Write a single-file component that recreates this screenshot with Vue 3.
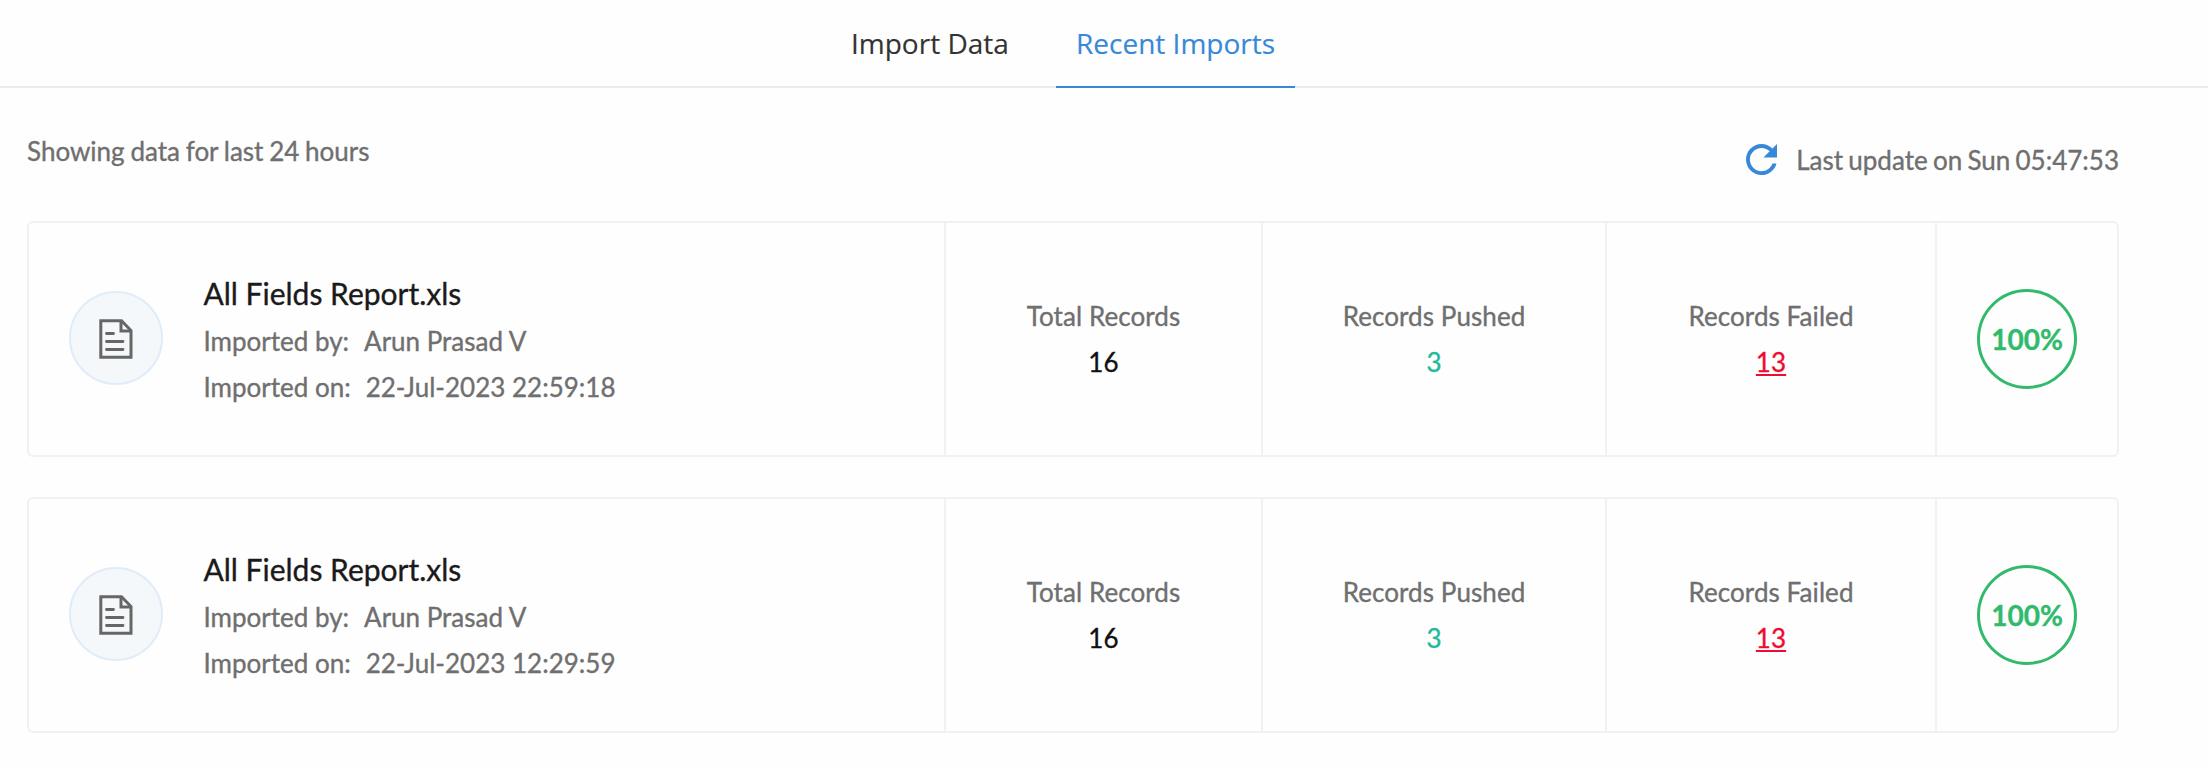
<script setup>
const tabs = [
  { label: 'Import Data', active: false },
  { label: 'Recent Imports', active: true },
]

const imports = [
  { file: 'All Fields Report.xls', by: 'Arun Prasad V', on: '22-Jul-2023 22:59:18', total: 16, pushed: 3, failed: 13, progress: '100%' },
  { file: 'All Fields Report.xls', by: 'Arun Prasad V', on: '22-Jul-2023 12:29:59', total: 16, pushed: 3, failed: 13, progress: '100%' },
]
</script>

<template>
  <div class="page">
    <nav class="tabs">
      <a v-for="tab in tabs" :key="tab.label" class="tab" :class="{ active: tab.active }">{{ tab.label }}</a>
    </nav>

    <main class="content">
      <header class="summary">
        <span class="range">Showing data for last 24 hours</span>
        <span class="updated">
          <svg class="refresh" viewBox="4 4 16 16" fill="currentColor">
            <path d="M17.65 6.35C16.2 4.9 14.21 4 12 4c-4.42 0-7.99 3.58-7.99 8s3.57 8 7.99 8c3.73 0 6.84-2.55 7.73-6h-2.08c-.82 2.33-3.04 4-5.65 4-3.31 0-6-2.69-6-6s2.69-6 6-6c1.66 0 3.14.69 4.22 1.78L13 11h7V4l-2.35 2.35z" />
          </svg>
          <span class="stamp">Last update on Sun 05:47:53</span>
        </span>
      </header>

      <section v-for="item in imports" :key="item.on" class="card">
        <div class="info">
          <span class="badge">
            <svg class="doc" viewBox="0 0 34 40" fill="none" stroke="currentColor" stroke-width="3">
              <path d="M1.8 1.8H22.5L32 11.5V38.2H1.8Z" />
              <path d="M22 1.8V12H32" />
              <path d="M7.5 14.5H14.5M7.5 22.5H24M7.5 30.5H24" stroke-width="2.8" stroke-linecap="round" />
            </svg>
          </span>
          <div class="details">
            <div class="file">{{ item.file }}</div>
            <div class="meta"><span>Imported by:</span><span class="value">{{ item.by }}</span></div>
            <div class="meta"><span>Imported on:</span><span class="value">{{ item.on }}</span></div>
          </div>
        </div>
        <div class="stat">
          <span>Total Records</span>
          <span class="total">{{ item.total }}</span>
        </div>
        <div class="stat">
          <span>Records Pushed</span>
          <span class="pushed">{{ item.pushed }}</span>
        </div>
        <div class="stat">
          <span>Records Failed</span>
          <a class="failed">{{ item.failed }}</a>
        </div>
        <div class="progress">
          <span class="ring">{{ item.progress }}</span>
        </div>
      </section>
    </main>
  </div>
</template>

<style>
body {
  background: #fefefe;
}
</style>

<style scoped>
.page,
.page * {
  box-sizing: border-box;
}
.page {
  width: 2208px;
  height: 770px;
  overflow: hidden;
  background: #fefefe;
  font-family: Lato, "Liberation Sans", sans-serif;
  font-size: 26px;
  line-height: 46px;
  color: #6f6f6f;
  -webkit-text-stroke: 0.35px currentColor;
}
.tabs {
  display: flex;
  gap: 8px;
  height: 88px;
  padding-left: 830px;
  border-bottom: 2px solid #ebebeb;
  font-family: "Open Sans", "Noto Sans", sans-serif;
  font-size: 28px;
  -webkit-text-stroke-width: 0.15px;
}
.tab {
  height: 88px;
  width: 218px;
  padding-left: 21px;
  line-height: 86px;
  white-space: nowrap;
  color: #333;
}
.tab.active {
  width: 239px;
  padding-left: 20px;
  border-bottom: 2px solid #3788d8;
  color: #3788d8;
}
.content {
  padding: 0 89px 0 27px;
}
.summary {
  display: flex;
  justify-content: space-between;
  height: 133px;
  padding-top: 40px;
}
.range {
  word-spacing: -0.9px;
}
.updated {
  display: flex;
  align-items: center;
  height: 46px;
  margin-top: 9px;
}
.refresh {
  width: 31px;
  height: 31px;
  margin-right: 19px;
  margin-top: -2px;
  color: #3788d8;
}
.stamp {
  word-spacing: -1.4px;
}
.card {
  display: grid;
  grid-template-columns: 915px 317px 344px 330px 182px;
  height: 236px;
  margin-bottom: 40px;
  border: 2px solid #f1f1f1;
  border-radius: 6px;
}
.info {
  display: flex;
  align-items: center;
  padding-left: 40px;
}
.badge {
  display: flex;
  align-items: center;
  justify-content: center;
  width: 94px;
  height: 94px;
  margin-top: -2px;
  padding-top: 2px;
  border: 2px solid #e0ecf9;
  border-radius: 50%;
  background: #f4f8fb;
}
.doc {
  width: 34px;
  height: 40px;
  color: #666;
}
.details {
  margin-left: 40.5px;
  padding-top: 2px;
}
.file {
  height: 48px;
  font-size: 30px;
  color: #1a1a1a;
}
.value {
  margin-left: 15px;
}
.stat {
  display: flex;
  flex-direction: column;
  align-items: center;
  justify-content: center;
  border-left: 2px solid #f1f1f1;
  letter-spacing: 0.08px;
}
.total {
  color: #111;
}
.pushed {
  color: #1fb99b;
}
.failed {
  color: #f00b31;
  text-decoration: underline;
}
.progress {
  display: flex;
  align-items: center;
  justify-content: center;
  border-left: 2px solid #f1f1f1;
}
.ring {
  display: flex;
  align-items: center;
  justify-content: center;
  width: 100px;
  height: 100px;
  border: 3px solid #32ba6c;
  border-radius: 50%;
  font-size: 28px;
  font-weight: 700;
  color: #32ba6c;
}
</style>
